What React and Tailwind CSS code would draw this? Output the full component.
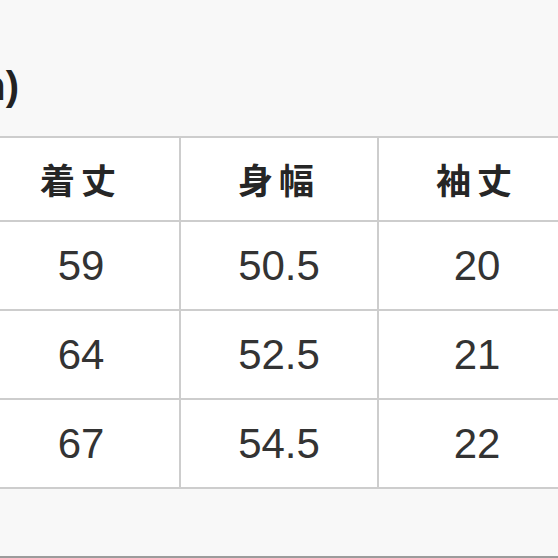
import React from 'react';

const headers = ['サイズ', '着丈', '身幅', '袖丈'];
const rows = [
  ['S', '59', '50.5', '20'],
  ['M', '64', '52.5', '21'],
  ['L', '67', '54.5', '22'],
];

const App = () => {
  return (
    <div className="w-[558px] h-[558px] overflow-hidden bg-[#f8f8f8] text-[#333]" style={{ fontFamily: '"Liberation Sans", "Noto Sans CJK JP", sans-serif' }}>
      <div className="h-[136px] pt-[66px]">
        <div className="flex justify-end w-[19px]">
          <span className="whitespace-nowrap text-[40px] leading-none font-bold text-[#222]">サイズ(cm)</span>
        </div>
      </div>

      <div className="ml-[-217px] w-max grid grid-cols-[196px_196px_196px_196px] gap-[2px] p-[2px] bg-[#cdcdcd]">
        {headers.map(h => (
          <div
            key={h}
            className="h-[82px] bg-white flex items-center justify-center text-[35px] font-bold tracking-[0.17em] text-[#262626]"
            style={{ fontFamily: '"Noto Sans CJK JP", sans-serif' }}
          >
            {h}
          </div>
        ))}
        {rows.map(r =>
          r.map((cell, i) => (
            <div key={r[0] + i} className="h-[87px] bg-white flex items-center justify-center text-[42px]">
              {cell}
            </div>
          ))
        )}
      </div>

      <div className="h-[69px] border-b-2 border-[#9c9c9c]"></div>
    </div>
  );
};

export default App;
